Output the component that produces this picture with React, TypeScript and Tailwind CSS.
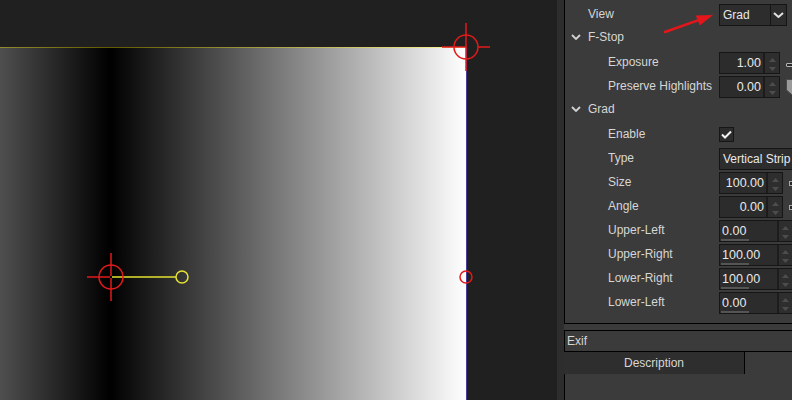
import React from 'react';

const LABEL = 'text-[12px] leading-[14px] text-[#d6d6d6] whitespace-nowrap';
const VALUE = 'text-[12.5px] text-[#e8e8e8] whitespace-nowrap';

function Chevron() {
  return (
    <svg width="10" height="6" viewBox="0 0 10 6" className="shrink-0">
      <path d="M1 1 L5 5 L9 1" fill="none" stroke="#d2d2d2" strokeWidth="1.8" />
    </svg>
  );
}

function SpinArrows({ className }: { className: string }) {
  return (
    <div className={`flex shrink-0 flex-col items-center justify-center gap-[5px] bg-[#2e2e2e] pt-[2px] ${className}`}>
      <svg width="7" height="4" viewBox="0 0 7 4">
        <path d="M0 4L3.5 0L7 4Z" fill="#4d4d4d" />
      </svg>
      <svg width="7" height="4" viewBox="0 0 7 4">
        <path d="M0 0L3.5 4L7 0Z" fill="#4d4d4d" />
      </svg>
    </div>
  );
}

function Row({ label, group, top, children }: { label: string; group?: boolean; top?: boolean; children?: React.ReactNode }) {
  return (
    <div className="flex h-6 items-center">
      <div
        className={
          group
            ? 'mb-[2px] flex w-[154px] shrink-0 items-center gap-[7px] pl-[6px]'
            : top
            ? 'mb-[2px] w-[154px] shrink-0 pl-[23px]'
            : 'mb-[2px] w-[154px] shrink-0 pl-[43px]'
        }
      >
        {group && <Chevron />}
        <span className={LABEL}>{label}</span>
      </div>
      {children}
    </div>
  );
}

function Combo({ value, wide }: { value: string; wide?: boolean }) {
  return (
    <div className={`flex h-[22px] shrink-0 self-end border border-[#151515] bg-[#2d2d2d] ${wide ? 'w-[80px]' : 'w-[68px]'}`}>
      <span className={`flex-1 pl-[3px] leading-[20px] ${VALUE} text-[12px]`}>{value}</span>
      {!wide && (
        <div className="flex w-[16px] items-center justify-center border-l border-[#151515]">
          <svg width="11" height="6" viewBox="0 0 11 6">
            <path d="M1 1 L5.5 5 L10 1" fill="none" stroke="#e2e2e2" strokeWidth="2" />
          </svg>
        </div>
      )}
    </div>
  );
}

function SpinBox({ value, wide }: { value: string; wide?: boolean }) {
  return (
    <div className={`flex h-[22px] shrink-0 self-end border border-[#161616] bg-[#2c2c2c] ${wide ? 'w-[64px]' : 'w-[61px]'}`}>
      <div className={`flex-1 pr-[2px] text-right leading-[20px] ${VALUE}`}>{value}</div>
      <SpinArrows className="w-[16px] border-l-2 border-[#1c1c1c]" />
    </div>
  );
}

function RangeBox({ value }: { value: string }) {
  return (
    <div className="flex h-[22px] w-[74px] shrink-0 self-end border border-[#161616] bg-[#2c2c2c]">
      <div className="flex w-[57px] shrink-0 flex-col pl-[2px] pt-[3px]">
        <span className={`leading-[14px] ${VALUE}`}>{value}</span>
        <div className="-ml-px mt-auto h-[2px] w-[28px] bg-[#555555]" />
      </div>
      <SpinArrows className="w-[15px] border-l-2 border-[#1c1c1c]" />
    </div>
  );
}

function Groove() {
  return <div className="ml-[6px] mt-[5px] h-[4px] w-[12px] shrink-0 rounded-[1px] border border-[#b4b4b4] bg-[#2a2a2a]" />;
}

function Tick() {
  return <div className="ml-[6px] mt-[3px] h-[5px] w-[8px] shrink-0 border border-[#a8a8a8] bg-[#2a2a2a]" />;
}

function Handle() {
  return (
    <svg width="12" height="17" viewBox="0 0 12 17" className="ml-[6px] mt-[2px] shrink-0">
      <path d="M0.5 0.5 H11.5 V11 L6 16 L0.5 11 Z" fill="#9a9a9a" stroke="#4a4a4a" />
    </svg>
  );
}

function Viewer() {
  return (
    <div className="relative h-full w-[557px] shrink-0 overflow-hidden pt-[47px]">
      <div className="h-full w-[467px] border-r border-[#4a3e98] bg-[linear-gradient(to_right,#4f4f4f,#000_23.6%,#fff)]" />
      <svg className="absolute inset-0" width="557" height="400">
        <line x1="0" y1="47.5" x2="466" y2="47.5" stroke="rgba(255,236,0,0.38)" strokeWidth="1" />
        {/* corner handle */}
        <g stroke="#e21a1a" strokeWidth="1.5" fill="none">
          <circle cx="466" cy="47" r="12" />
          <line x1="442" y1="47" x2="466" y2="47" />
          <line x1="478" y1="47" x2="490" y2="47" />
          <line x1="466" y1="23" x2="466" y2="71" />
          <circle cx="466" cy="277" r="6" />
        </g>
        {/* center handle */}
        <line x1="111" y1="277" x2="176" y2="277" stroke="#e6e232" strokeWidth="1.5" />
        <circle cx="182" cy="277" r="6" stroke="#e6e232" strokeWidth="1.5" fill="none" />
        <g stroke="#e21a1a" strokeWidth="1.5" fill="none">
          <circle cx="111" cy="277" r="12" />
          <line x1="87" y1="277" x2="111" y2="277" />
          <line x1="111" y1="253" x2="111" y2="301" />
        </g>
        <rect x="110" y="276" width="2" height="2" fill="#000" />
      </svg>
    </div>
  );
}

export default function App() {
  return (
    <div className="relative flex h-[400px] w-[792px] overflow-hidden bg-[#202020] font-['Liberation_Sans',Arial,sans-serif]">
      <Viewer />

      <div className="flex w-[235px] shrink-0">
        <div className="w-[7px] shrink-0 bg-[#2d2d2d]" />
        <div className="flex min-w-0 flex-1 flex-col overflow-hidden bg-[#3b3b3b]">
          {/* properties */}
          <div className="h-[324px] shrink-0 border-b border-l border-black pt-[2px]">
            <Row label="View" top>
              <Combo value="Grad" />
            </Row>
            <Row label="F-Stop" group />
            <Row label="Exposure">
              <SpinBox value="1.00" />
              <Groove />
            </Row>
            <Row label="Preserve Highlights">
              <SpinBox value="0.00" />
              <Handle />
            </Row>
            <Row label="Grad" group />
            <Row label="Enable">
              <div className="flex h-[15px] w-[15px] shrink-0 items-center justify-center border border-[#161616] bg-[#2c2c2c]">
                <svg width="11" height="9" viewBox="0 0 11 9">
                  <path d="M1 4.5 L4 7.5 L10 1.5" fill="none" stroke="#f2f2f2" strokeWidth="2" />
                </svg>
              </div>
            </Row>
            <Row label="Type">
              <Combo value="Vertical Strip" wide />
            </Row>
            <Row label="Size">
              <SpinBox value="100.00" wide />
              <Tick />
            </Row>
            <Row label="Angle">
              <SpinBox value="0.00" wide />
              <Tick />
            </Row>
            <Row label="Upper-Left">
              <RangeBox value="0.00" />
            </Row>
            <Row label="Upper-Right">
              <RangeBox value="100.00" />
            </Row>
            <Row label="Lower-Right">
              <RangeBox value="100.00" />
            </Row>
            <Row label="Lower-Left">
              <RangeBox value="0.00" />
            </Row>
          </div>

          {/* exif */}
          <div className="mt-[6px] flex h-[22px] shrink-0 items-center border-y border-l border-black pl-[2px]">
            <span className={LABEL}>Exif</span>
          </div>
          <div className="flex h-[22px] shrink-0">
            <div className="flex w-[181px] items-center justify-center border-r border-black bg-[#2e2e2e]">
              <span className={LABEL}>Description</span>
            </div>
          </div>
          <div className="flex-1 border-l border-black" />
        </div>
      </div>

      <svg className="pointer-events-none absolute inset-0" width="792" height="400">
        <line x1="665" y1="32" x2="700" y2="19.6" stroke="#e5161b" strokeWidth="2.5" strokeLinecap="round" />
        <path d="M713 15 L695.8 15.6 L699.8 25.4 Z" fill="#e5161b" />
      </svg>
    </div>
  );
}
